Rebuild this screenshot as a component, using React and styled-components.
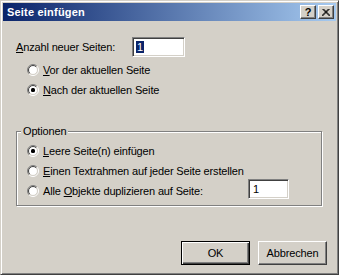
import React from "react";
import styled, { createGlobalStyle } from "styled-components";

const Global = createGlobalStyle`
  html, body { margin: 0; padding: 0; background: #d4d0c8; }
  body { font-family: "Liberation Sans", Arial, sans-serif; font-size: 11px; color: #000; letter-spacing: -0.15px; }
  * { box-sizing: border-box; }
`;

const Window = styled.div`
  width: 339px;
  height: 275px;
  background: #d4d0c8;
  border: 1px solid;
  border-color: #d4d0c8 #404040 #404040 #d4d0c8;
  box-shadow: inset 1px 1px #fff, inset -1px -1px #808080;
  padding: 2px;
  display: flex;
  flex-direction: column;
`;

const TitleBar = styled.div`
  height: 18px;
  background: linear-gradient(to right, #0a246a, #a6caf0);
  display: flex;
  align-items: center;
  padding: 0 2px 0 2px;
  gap: 2px;
`;

const TitleText = styled.div`
  flex: 1;
  color: #fff;
  font-weight: bold;
  font-size: 11px;
  line-height: 18px;
  padding-left: 2px;
  letter-spacing: 0.2px;
`;

const CaptionButton = styled.div`
  width: 16px;
  height: 14px;
  background: #d4d0c8;
  border: 1px solid;
  border-color: #fff #404040 #404040 #fff;
  box-shadow: inset -1px -1px #808080;
  display: flex;
  align-items: center;
  justify-content: center;
  color: #000;
  font-weight: bold;
  font-size: 11px;
  line-height: 1;
`;

const Client = styled.div`
  flex: 1;
  display: flex;
  flex-direction: column;
  padding: 16px 9px 0 13px;
`;

const FieldRow = styled.div`
  display: flex;
  align-items: center;
  height: 20px;
`;

const FieldLabel = styled.div`
  width: 116px;
`;

const TextBox = styled.div`
  width: ${(p) => p.$w}px;
  height: 20px;
  background: #fff;
  border: 1px solid;
  border-color: #808080 #fff #fff #808080;
  box-shadow: inset 1px 1px #404040, inset -1px -1px #d4d0c8;
  padding: 0 0 0 ${(p) => p.$pl}px;
  display: flex;
  align-items: center;
  margin-top: ${(p) => p.$mt || 0}px;
  align-self: ${(p) => (p.$mt ? "flex-start" : "auto")};
`;

const Selected = styled.span`
  background: #0a246a;
  color: #fff;
  padding: 0 1px;
  line-height: 12px;
`;

const RadioList = styled.div`
  display: flex;
  flex-direction: column;
  padding-left: ${(p) => p.$indent}px;
  margin-top: ${(p) => p.$mt}px;
`;

const RadioRow = styled.div`
  display: flex;
  align-items: center;
  height: 20px;
  gap: 4px;
`;

const RadioLabel = styled.span`
  flex: ${(p) => (p.$grow ? 1 : "none")};
`;

const GroupBox = styled.div`
  position: relative;
  margin-top: 31px;
  width: 306px;
  height: 75px;
  border: 1px solid #808080;
  box-shadow: inset 1px 1px #fff, 1px 1px #fff;
  padding: 9px 0 0 10px;
`;

const Legend = styled.span`
  position: absolute;
  top: -7px;
  left: 4px;
  padding: 0 2px;
  background: #d4d0c8;
  line-height: 13px;
`;

const GroupList = styled.div`
  display: flex;
  flex-direction: column;
  padding-right: 32px;
`;

const ButtonRow = styled.div`
  display: flex;
  justify-content: flex-end;
  gap: 8px;
  margin-top: 35px;
`;

const Button = styled.div`
  width: 69px;
  height: 24px;
  background: #d4d0c8;
  display: flex;
  align-items: center;
  justify-content: center;
  border: 1px solid;
  border-color: ${(p) => (p.$default ? "#000" : "#fff #404040 #404040 #fff")};
  box-shadow: ${(p) =>
    p.$default
      ? "inset 1px 1px #fff, inset -1px -1px #404040, inset -2px -2px #808080"
      : "inset -1px -1px #808080"};
`;

function Radio({ checked }) {
  const r1 = 5.5, r2 = 4.5, c = 6;
  const d = (r) => {
    const k = r / Math.SQRT2;
    return [
      `M ${c - k} ${c + k} A ${r} ${r} 0 0 1 ${c + k} ${c - k}`,
      `M ${c + k} ${c - k} A ${r} ${r} 0 0 1 ${c - k} ${c + k}`,
    ];
  };
  const [o1, o2] = d(r1);
  const [i1, i2] = d(r2);
  return (
    <svg width="12" height="12" viewBox="0 0 12 12" style={{ flex: "none" }}>
      <circle cx="6" cy="6" r="4.5" fill="#fff" />
      <path d={o1} stroke="#808080" fill="none" />
      <path d={o2} stroke="#fff" fill="none" />
      <path d={i1} stroke="#404040" fill="none" />
      <path d={i2} stroke="#d4d0c8" fill="none" />
      {checked && <rect x="4" y="4" width="4" height="4" rx="1.5" fill="#000" />}
    </svg>
  );
}

function CloseGlyph() {
  return (
    <svg width="8" height="7" viewBox="0 0 8 7">
      <path d="M0.5 0 L7.5 7 M1.5 0 L8.5 7 M7.5 0 L0.5 7 M6.5 0 L-0.5 7" stroke="#000" strokeWidth="1" fill="none" />
    </svg>
  );
}

export default function App() {
  return (
    <>
      <Global />
      <Window>
        <TitleBar>
          <TitleText>Seite einfügen</TitleText>
          <CaptionButton>?</CaptionButton>
          <CaptionButton>
            <CloseGlyph />
          </CaptionButton>
        </TitleBar>
        <Client>
          <FieldRow>
            <FieldLabel>
              <u>A</u>nzahl neuer Seiten:
            </FieldLabel>
            <TextBox $w={53} $pl={3}>
              <Selected>1</Selected>
            </TextBox>
          </FieldRow>
          <RadioList $indent={11} $mt={3}>
            <RadioRow>
              <Radio />
              <RadioLabel>
                <u>V</u>or der aktuellen Seite
              </RadioLabel>
            </RadioRow>
            <RadioRow>
              <Radio checked />
              <RadioLabel>
                <u>N</u>ach der aktuellen Seite
              </RadioLabel>
            </RadioRow>
          </RadioList>
          <GroupBox>
            <Legend>Optionen</Legend>
            <GroupList>
              <RadioRow>
                <Radio checked />
                <RadioLabel>
                  <u>L</u>eere Seite(n) einfügen
                </RadioLabel>
              </RadioRow>
              <RadioRow>
                <Radio />
                <RadioLabel>
                  <u>E</u>inen Textrahmen auf jeder Seite erstellen
                </RadioLabel>
              </RadioRow>
              <RadioRow>
                <Radio />
                <RadioLabel $grow>
                  Alle <u>O</u>bjekte duplizieren auf Seite:
                </RadioLabel>
                <TextBox $w={41} $pl={4} $mt={-2}>
                  1
                </TextBox>
              </RadioRow>
            </GroupList>
          </GroupBox>
          <ButtonRow>
            <Button $default>OK</Button>
            <Button>Abbrechen</Button>
          </ButtonRow>
        </Client>
      </Window>
    </>
  );
}
